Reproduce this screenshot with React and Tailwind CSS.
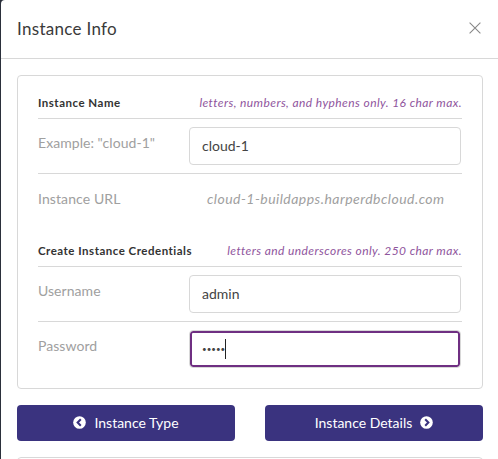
import React from "react";

function CircleChevron({ dir }) {
  return (
    <svg viewBox="0 0 14 14" className="w-[13px] h-[13px]">
      <circle cx="7" cy="7" r="6.8" fill="#fff" />
      <path
        d={dir === "left" ? "M8.4 3.6 5 7l3.4 3.4" : "M5.6 3.6 9 7l-3.4 3.4"}
        fill="none"
        stroke="#3a337f"
        strokeWidth="2.2"
      />
    </svg>
  );
}

function SectionHead({ title, hint }) {
  return (
    <div className="flex items-center justify-between h-[24px] pb-[7px] border-b border-[#d8d8d8]">
      <span className="text-[11.5px] font-bold tracking-[0.5px] text-[#333]">{title}</span>
      <span className="text-[12px] italic tracking-[0.42px] text-[#8f559d]">{hint}</span>
    </div>
  );
}

function InputRow({ label, bordered = true, focused = false, children }) {
  return (
    <div className={`flex items-start py-[8px] ${bordered ? "border-b border-[#d8d8d8]" : ""}`}>
      <div className="w-[151px] shrink-0 pt-[6px] text-[14px] leading-[20px] tracking-[0.05px] text-[#a0a0a0]">{label}</div>
      <div
        className={`w-[272px] h-[38px] rounded-[4px] bg-white border border-[#d8d8d8] pl-[12px] pb-px flex items-center text-[14px] text-[#444] ${
          focused ? "shadow-[inset_0_0_0_2px_#6f2f82]" : ""
        }`}
      >
        {children}
      </div>
    </div>
  );
}

export default function App() {
  return (
    <div className="w-[498px] h-[459px] overflow-hidden bg-[#2b303b] pl-px font-['Lato','Open_Sans',sans-serif]">
      <div className="h-full bg-white rounded-tl-[4px]">
        <div className="h-[59px] border-b border-[#d8d8d8] flex items-center justify-between pl-[16px] pr-[17px]">
          <span className="text-[17px] tracking-[0.3px] text-[#3a3a3a]">Instance Info</span>
          <svg viewBox="0 0 12 12" className="w-[12px] h-[12px] mb-[3px]">
            <path d="M.6.6l10.8 10.8M11.4.6.6 11.4" stroke="#888" strokeWidth="1.1" fill="none" />
          </svg>
        </div>
        <div className="pl-[16px] pr-[15px] pt-[16px]">
          <div className="h-[314px] border border-[#d8d8d8] rounded-[4px] px-[20px] pt-[19px]">
            <SectionHead title="Instance Name" hint="letters, numbers, and hyphens only. 16 char max." />
            <InputRow label={'Example: "cloud-1"'}>cloud-1</InputRow>
            <div className="flex items-center h-[48px] text-[14px] text-[#a0a0a0]">
              <div className="w-[169px] shrink-0 tracking-[0.1px]">Instance URL</div>
              <div className="italic tracking-[0.47px]">cloud-1-buildapps.harperdbcloud.com</div>
            </div>
            <div className="pt-[21px]">
              <SectionHead title="Create Instance Credentials" hint="letters and underscores only. 250 char max." />
            </div>
            <InputRow label="Username">admin</InputRow>
            <InputRow label="Password" bordered={false} focused>
              <span className="text-[8px] leading-none">•••••</span>
              <span className="w-px h-[20px] bg-[#222]" />
            </InputRow>
          </div>
          <div className="grid grid-cols-2 gap-[30px] pt-[16px]">
            <button className="h-[36px] rounded-[4px] bg-[#3a337f] text-white text-[14px] pb-px flex items-center justify-center gap-[8px]">
              <CircleChevron dir="left" />
              Instance Type
            </button>
            <button className="h-[36px] rounded-[4px] bg-[#3a337f] text-white text-[14px] pb-px flex items-center justify-center gap-[8px]">
              Instance Details
              <CircleChevron dir="right" />
            </button>
          </div>
          <div className="mt-[16px] h-[20px] border border-[#d8d8d8] rounded-[4px]" />
        </div>
      </div>
    </div>
  );
}
